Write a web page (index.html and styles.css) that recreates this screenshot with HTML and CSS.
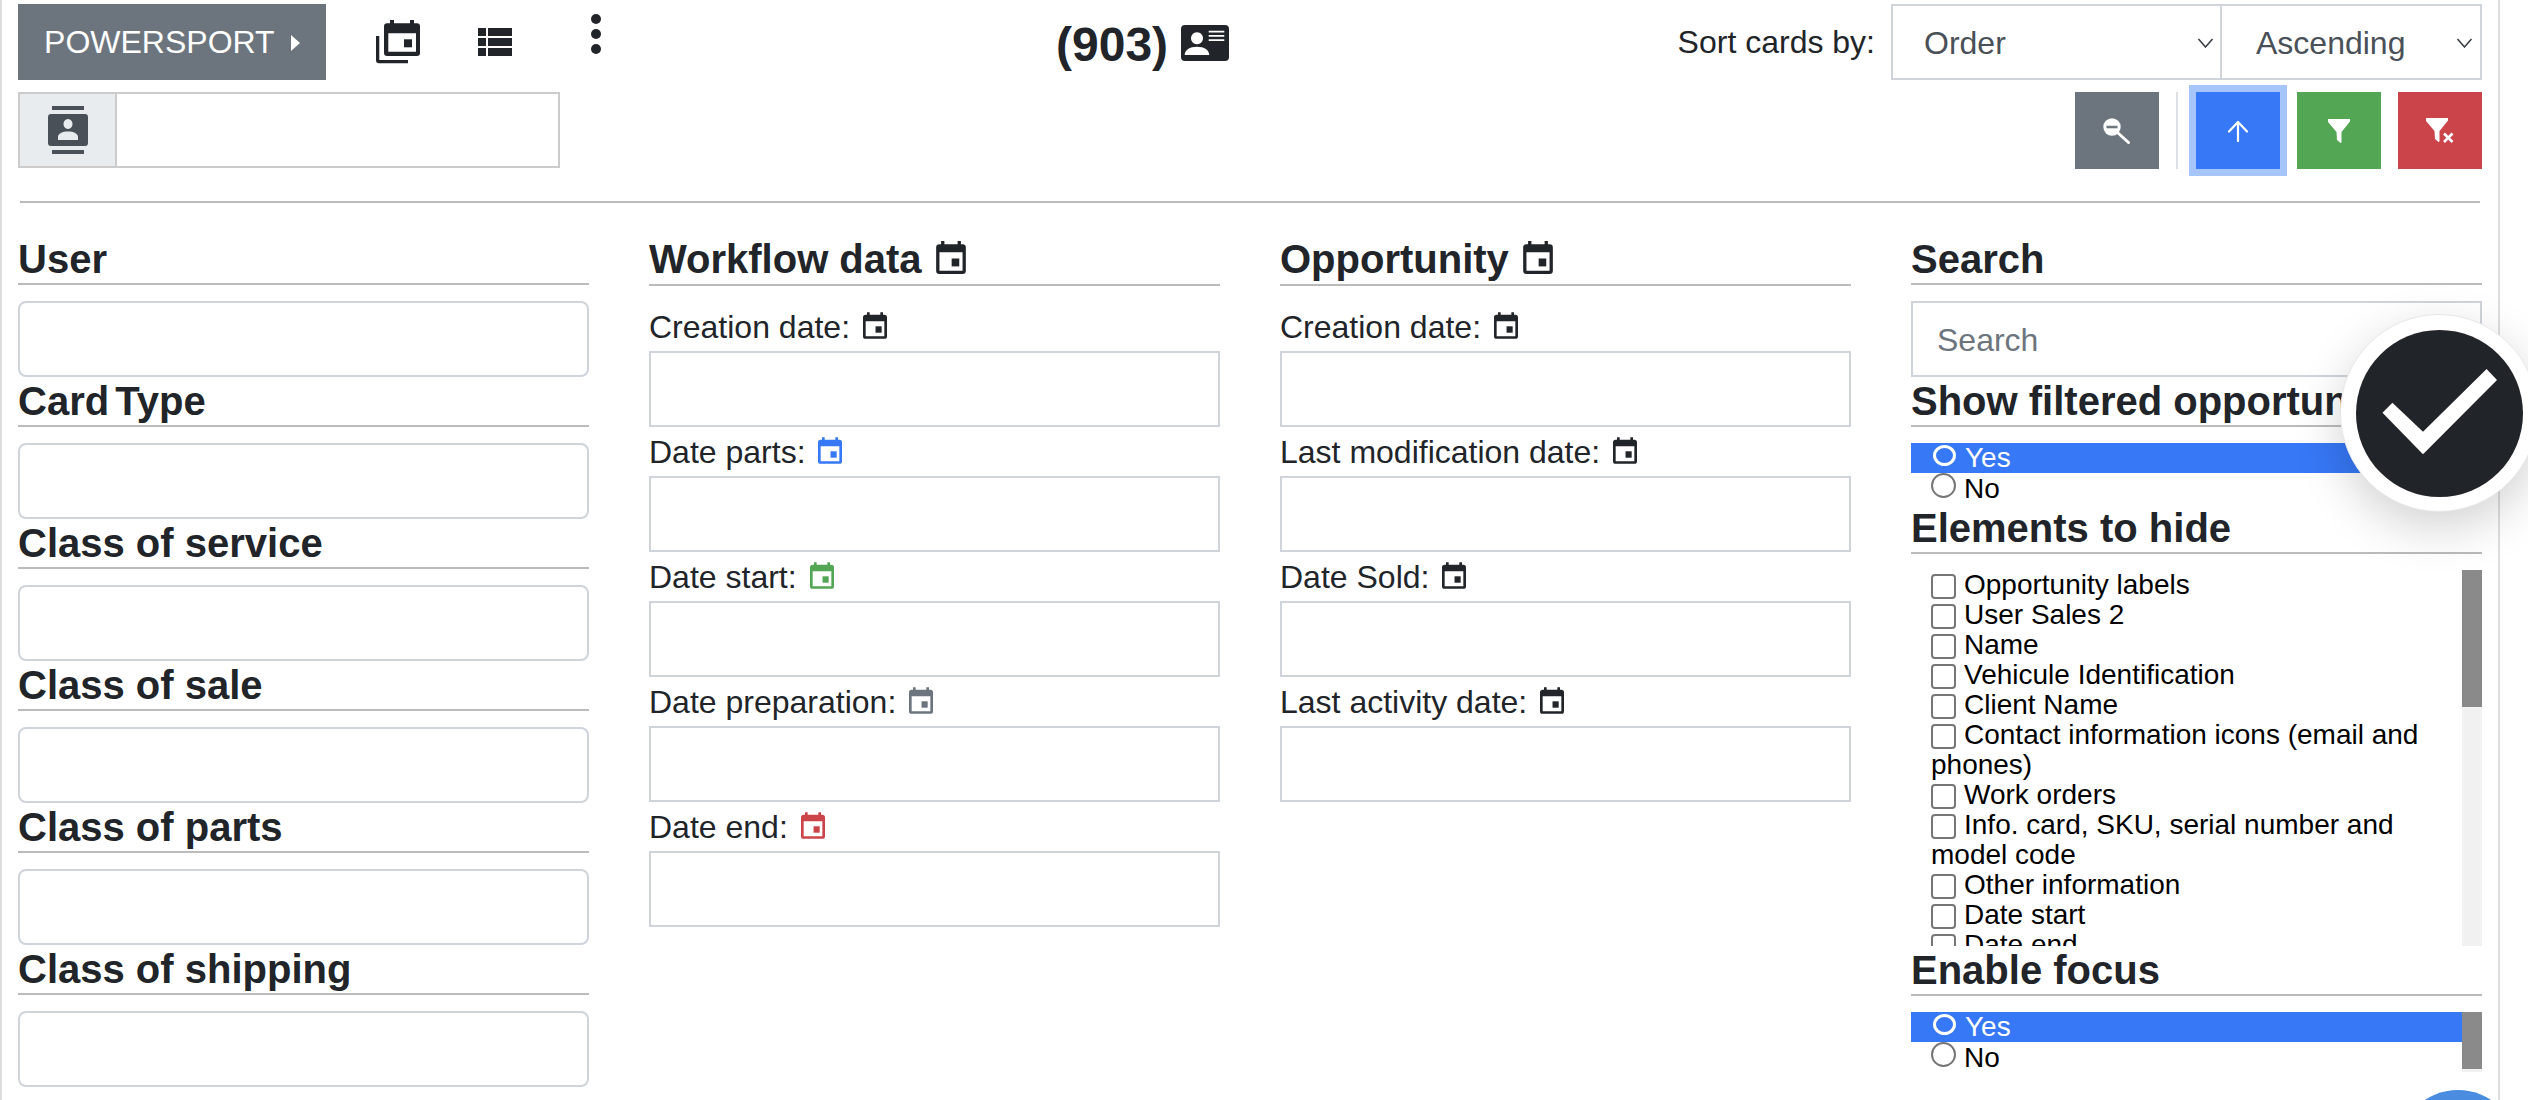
FILE: index.html
```html
<!DOCTYPE html>
<html lang="en">
<head>
    <meta charset="UTF-8">
    <title>Cards filter</title>
    <link rel="stylesheet" href="styles.css">
</head>
<body>
    <svg class="sprite" aria-hidden="true">
        <symbol id="cal" viewBox="0 0 18 20">
            <path fill-rule="evenodd" d="M3 0h2v2h8V0h2v2h1a2 2 0 0 1 2 2v14a2 2 0 0 1-2 2H2a2 2 0 0 1-2-2V4a2 2 0 0 1 2-2h1zM2 6.800v11.200h14V6.800z"/>
            <rect x="9.400" y="10.600" width="4.600" height="4.800"/>
        </symbol>
    </svg>

    <div class="modal">
        <div class="toolbar">
            <div class="toolbar-left">
                <button class="btn-dealer">POWERSPORT <span class="caret"></span></button>
                <svg class="icon-stack" viewBox="0 0 44 44">
                    <path fill-rule="evenodd" d="M14 0h4v3.300h16V0h4v3.300h3a3 3 0 0 1 3 3V33a3 3 0 0 1-3 3H11a3 3 0 0 1-3-3V6.300a3 3 0 0 1 3-3h3zM12.300 13.300v18.400H40V13.300z"/>
                    <rect x="28" y="19.300" width="8" height="8"/>
                    <path d="M0 16h3.300v24H32v3.300H3a3 3 0 0 1-3-3z"/>
                </svg>
                <svg class="icon-table" viewBox="0 0 34 28">
                    <path d="M0 0h8v8H0zM10 0h24v8H10zM0 10h8v8H0zM10 10h24v8H10zM0 20h8v8H0zM10 20h24v8H10z"/>
                </svg>
                <svg class="icon-dots" viewBox="0 0 10 40">
                    <circle cx="5" cy="5" r="5"/><circle cx="5" cy="20" r="5"/><circle cx="5" cy="35" r="5"/>
                </svg>
            </div>
            <div class="count">
                (903)
                <svg class="icon-vcard" viewBox="0 0 48 36">
                    <path fill-rule="evenodd" d="M4 0h40a4 4 0 0 1 4 4v28a4 4 0 0 1-4 4H4a4 4 0 0 1-4-4V4a4 4 0 0 1 4-4zM16 7.300a6 6 0 1 0 .01 0zM3.700 30h24.600c0-5-5-8.300-12.300-8.300S3.700 25 3.700 30zM27.700 5.700v1.800h15.600V5.700zM27.700 10v1.800h15.600V10zM27.700 14.300v1.800h15.600v-1.800z"/>
                </svg>
            </div>
            <div class="sort">
                <label class="sort-label">Sort cards by:</label>
                <div class="select-wrap select-order">
                    <select><option>Order</option></select>
                    <svg class="chevron" viewBox="0 0 16 10"><path d="M1 1l7 8 7-8" fill="none" stroke="#343a40" stroke-width="1.500"/></svg>
                </div>
                <div class="select-wrap select-dir">
                    <select><option>Ascending</option></select>
                    <svg class="chevron" viewBox="0 0 16 10"><path d="M1 1l7 8 7-8" fill="none" stroke="#343a40" stroke-width="1.500"/></svg>
                </div>
            </div>
        </div>

        <div class="toolbar toolbar-second">
            <div class="input-group">
                <span class="addon">
                    <svg class="icon-contacts" viewBox="0 0 40 48">
                        <path fill-rule="evenodd" d="M4 0h32v4H4zM4 44h32v4H4zM3 8h34a3 3 0 0 1 3 3v26a3 3 0 0 1-3 3H3a3 3 0 0 1-3-3V11a3 3 0 0 1 3-3zM20 13a4.500 5 0 1 0 .01 0zM10 34h20v-3c0-3.500-4.500-5.500-10-5.500S10 27.500 10 31z"/>
                    </svg>
                </span>
                <input type="text" class="group-input">
            </div>
            <div class="actions">
                <button class="btn-icon btn-gray">
                    <svg viewBox="0 0 28 26" width="28" height="26">
                        <circle cx="9" cy="9" r="8.700" fill="#fff"/>
                        <rect x="3.500" y="7.800" width="11" height="2.500" fill="#6c757d"/>
                        <path d="M15 15l10.500 9.500" stroke="#fff" stroke-width="3" stroke-linecap="round" fill="none"/>
                    </svg>
                </button>
                <span class="divider"></span>
                <button class="btn-icon btn-blue">
                    <svg viewBox="0 0 22 22" width="22" height="22">
                        <path d="M11 21V2M2 11.500L11 2l9 9.500" stroke="#fff" stroke-width="2.200" stroke-linecap="round" stroke-linejoin="round" fill="none"/>
                    </svg>
                </button>
                <button class="btn-icon btn-green">
                    <svg viewBox="0 0 22 24" width="22" height="24">
                        <path d="M0 0h22v2.500L13.500 13v10.500l-1 .5L9 21l-.5-8L0 3z" fill="#fff"/>
                    </svg>
                </button>
                <button class="btn-icon btn-red">
                    <svg viewBox="0 0 30 26" width="30" height="26">
                        <path d="M1 0h22v2.500L14.500 13v10.500l-1 .5L10 21l-.5-8L1 3z" fill="#fff"/>
                        <path d="M19 15.500l8.500 8.500M27.500 15.500L19 24" stroke="#fff" stroke-width="2.600" fill="none"/>
                    </svg>
                </button>
            </div>
        </div>

        <hr class="rule">

        <div class="columns">
            <div class="column">
                <h4 class="title">User</h4>
                <input type="text" class="field field-round">
                <h4 class="title title-tight">Card Type</h4>
                <input type="text" class="field field-round">
                <h4 class="title">Class of service</h4>
                <input type="text" class="field field-round">
                <h4 class="title">Class of sale</h4>
                <input type="text" class="field field-round">
                <h4 class="title">Class of parts</h4>
                <input type="text" class="field field-round">
                <h4 class="title">Class of shipping</h4>
                <input type="text" class="field field-round">
            </div>

            <div class="column">
                <h4 class="title title-icon">Workflow data <svg class="cal-big"><use href="#cal"/></svg></h4>
                <label class="field-label">Creation date: <svg class="cal-small"><use href="#cal"/></svg></label>
                <input type="text" class="field">
                <label class="field-label">Date parts: <svg class="cal-small c-blue"><use href="#cal"/></svg></label>
                <input type="text" class="field">
                <label class="field-label">Date start: <svg class="cal-small c-green"><use href="#cal"/></svg></label>
                <input type="text" class="field">
                <label class="field-label">Date preparation: <svg class="cal-small c-gray"><use href="#cal"/></svg></label>
                <input type="text" class="field">
                <label class="field-label">Date end: <svg class="cal-small c-red"><use href="#cal"/></svg></label>
                <input type="text" class="field">
            </div>

            <div class="column">
                <h4 class="title title-icon">Opportunity <svg class="cal-big"><use href="#cal"/></svg></h4>
                <label class="field-label">Creation date: <svg class="cal-small"><use href="#cal"/></svg></label>
                <input type="text" class="field">
                <label class="field-label">Last modification date: <svg class="cal-small"><use href="#cal"/></svg></label>
                <input type="text" class="field">
                <label class="field-label">Date Sold: <svg class="cal-small"><use href="#cal"/></svg></label>
                <input type="text" class="field">
                <label class="field-label">Last activity date: <svg class="cal-small"><use href="#cal"/></svg></label>
                <input type="text" class="field">
            </div>

            <div class="column">
                <h4 class="title">Search</h4>
                <input type="text" class="field" placeholder="Search">

                <h4 class="title">Show filtered opportunities</h4>
                <div class="option-list">
                    <label class="option option-on"><input type="radio" name="show" checked>Yes</label>
                    <label class="option"><input type="radio" name="show">No</label>
                </div>

                <h4 class="title">Elements to hide</h4>
                <div class="scroll-box box-elements">
                    <div class="option-list">
                        <label class="option"><input type="checkbox">Opportunity labels</label>
                        <label class="option"><input type="checkbox">User Sales 2</label>
                        <label class="option"><input type="checkbox">Name</label>
                        <label class="option"><input type="checkbox">Vehicule Identification</label>
                        <label class="option"><input type="checkbox">Client Name</label>
                        <label class="option"><input type="checkbox">Contact information icons (email and phones)</label>
                        <label class="option"><input type="checkbox">Work orders</label>
                        <label class="option"><input type="checkbox">Info. card, SKU, serial number and model code</label>
                        <label class="option"><input type="checkbox">Other information</label>
                        <label class="option"><input type="checkbox">Date start</label>
                        <label class="option"><input type="checkbox">Date end</label>
                    </div>
                    <div class="scrollbar"><span class="thumb"></span></div>
                </div>

                <h4 class="title">Enable focus</h4>
                <div class="scroll-box box-focus">
                    <div class="option-list">
                        <label class="option option-on"><input type="radio" name="focus" checked>Yes</label>
                        <label class="option"><input type="radio" name="focus">No</label>
                    </div>
                    <div class="scrollbar"><span class="thumb"></span></div>
                </div>
            </div>
        </div>
    </div>

    <div class="confirm">
        <span class="confirm-inner">
            <svg viewBox="0 0 167 167" width="167" height="167">
                <path d="M36.400 72.700L67 101.700 130.600 39 141 50 67 124.300 26.500 82.700z" fill="#fff"/>
            </svg>
        </span>
    </div>
    <div class="fab"></div>
</body>
</html>
```

FILE: styles.css
```css
* {
    box-sizing: border-box;
}
html, body {
    height: 100%;
    overflow: hidden;
}
body {
    margin: 0;
    background: #fff;
    color: #212529;
    font-family: "Liberation Sans", Arial, sans-serif;
    font-size: 32px;
    line-height: 48px;
}
.sprite {
    display: none;
}
.modal {
    width: 2500px;
    height: 1100px;
    padding: 4px 16px 0;
    border-left: 2px solid #ddd;
    border-right: 2px solid #ddd;
}

/* top bars */
.toolbar {
    display: grid;
    grid-template-columns: 1038px auto 1fr;
    align-items: center;
    height: 76px;
}
.toolbar-second {
    display: flex;
    justify-content: space-between;
    align-items: flex-start;
    margin-top: 12px;
    height: 77px;
}
.toolbar-left {
    display: flex;
    align-items: center;
}
.btn-dealer {
    width: 308px;
    height: 76px;
    border: none;
    padding: 0;
    background: #6c757d;
    color: #fff;
    font: inherit;
}
.caret {
    display: inline-block;
    margin-left: 8px;
    border-left: 9px solid #fff;
    border-top: 8px solid transparent;
    border-bottom: 8px solid transparent;
    vertical-align: 2px;
}
.icon-stack {
    width: 44px;
    height: 44px;
    margin-left: 50px;
    fill: #212529;
}
.icon-table {
    width: 34px;
    height: 28px;
    margin-left: 58px;
    fill: #212529;
}
.icon-dots {
    width: 10px;
    height: 40px;
    margin-left: 79px;
    margin-top: -16px;
    fill: #212529;
}
.count {
    display: flex;
    align-items: center;
    gap: 13px;
    margin-top: 5px;
    font-size: 48px;
    font-weight: bold;
    line-height: 58px;
}
.icon-vcard {
    width: 48px;
    height: 36px;
    margin-top: -3px;
    fill: #212529;
}
.sort {
    display: flex;
    justify-content: flex-end;
    align-items: center;
}
.sort-label {
    margin-right: 16px;
}
.select-wrap {
    position: relative;
    height: 76px;
}
.select-order {
    width: 331px;
}
.select-dir {
    width: 262px;
    margin-left: -2px;
}
.select-wrap select {
    width: 100%;
    height: 100%;
    appearance: none;
    border: 2px solid #ced4da;
    border-radius: 0;
    padding: 2px 48px 0 31px;
    background: #fff;
    color: #495057;
    font: inherit;
}
.select-dir select {
    padding-left: 34px;
}
.chevron {
    position: absolute;
    right: 8px;
    top: 34px;
    width: 17px;
    height: 10px;
}
.select-dir .chevron {
    right: 9px;
}

.input-group {
    display: flex;
    width: 542px;
    height: 76px;
}
.addon {
    display: flex;
    justify-content: center;
    align-items: center;
    width: 99px;
    background: #e9ecef;
    border: 2px solid #ccc;
}
.icon-contacts {
    width: 40px;
    height: 48px;
    fill: #495057;
}
.group-input {
    flex: 1;
    border: 2px solid #ccc;
    border-left: none;
    border-radius: 0;
    outline: none;
}
.actions {
    display: flex;
    align-items: stretch;
    gap: 17px;
    height: 77px;
}
.btn-icon {
    display: flex;
    justify-content: center;
    align-items: center;
    width: 84px;
    border: none;
    padding: 0;
}
.btn-gray {
    background: #6c757d;
}
.btn-blue {
    background: #3778f6;
    box-shadow: 0 0 0 7px #a6c6fb;
}
.btn-green {
    background: #53a653;
}
.btn-red {
    background: #cb444a;
}
.divider {
    width: 2px;
    background: #dee2e6;
    margin-right: 1px;
}
.rule {
    height: 2px;
    margin: 32px 2px;
    border: none;
    background: #bbb;
}

/* filter columns */
.columns {
    display: grid;
    grid-template-columns: repeat(4, 1fr);
    column-gap: 60px;
}
.column {
    min-width: 0;
}
.title {
    margin: 0 0 16px;
    height: 50px;
    border-bottom: 2px solid #bbb;
    font-size: 40px;
    font-weight: bold;
    line-height: 48px;
    white-space: nowrap;
    overflow: hidden;
}
.title-icon {
    height: 51px;
}
.title-tight {
    word-spacing: -5px;
}
.cal-big {
    width: 30px;
    height: 33px;
    margin-left: 3px;
    vertical-align: -1px;
    fill: currentColor;
}
.cal-small {
    width: 24px;
    height: 27px;
    margin-left: 4px;
    vertical-align: -1px;
    fill: #212529;
}
.c-blue {
    fill: #3778f6;
}
.c-green {
    fill: #53a653;
}
.c-gray {
    fill: #6c757d;
}
.c-red {
    fill: #cb444a;
}
.field-label {
    display: block;
    height: 49px;
    padding-top: 1px;
    line-height: 49px;
}
.field {
    display: block;
    width: 100%;
    height: 76px;
    padding: 2px 24px 0;
    border: 2px solid #ced4da;
    border-radius: 0;
    outline: none;
    color: #495057;
    font: inherit;
}
.field::placeholder {
    color: #6c757d;
    opacity: 1;
}
.field-round {
    border-radius: 8px;
}

/* radio and checkbox lists */
.option-list {
    font-size: 28px;
    line-height: 30px;
    color: #000;
}
.scroll-box {
    display: flex;
    overflow: hidden;
}
.scroll-box .option-list {
    flex: 1;
    min-width: 0;
}
.box-elements {
    height: 376px;
}
.box-focus {
    height: 60px;
}
.scrollbar {
    flex: none;
    width: 20px;
    background: #f1f1f1;
}
.thumb {
    display: block;
    background: #8a8a8a;
}
.box-elements .thumb {
    height: 137px;
}
.box-focus .thumb {
    height: 57px;
}
.option {
    display: block;
    padding-left: 20px;
}
.option input {
    appearance: none;
    width: 25px;
    height: 25px;
    margin: 0 8px 0 0;
    border: 2px solid #767676;
    border-radius: 4px;
    background: #fff;
    vertical-align: -5px;
}
.option input[type="radio"] {
    border-radius: 50%;
    vertical-align: 0;
}
.option-on {
    background: #3778f6;
    color: #fff;
}
.option-on input[type="radio"] {
    width: 23px;
    height: 21px;
    margin: 0 9px 0 2px;
    border: 3px solid #fff;
    background: transparent;
    vertical-align: 1px;
}

/* floating things */
.confirm {
    position: fixed;
    left: 2340px;
    top: 314px;
    display: flex;
    justify-content: center;
    align-items: center;
    width: 198px;
    height: 198px;
    border: 1px solid #e6e6e6;
    border-radius: 50%;
    background: #fff;
    box-shadow: 0 16px 48px rgba(0, 0, 0, 0.175);
}
.confirm-inner {
    display: block;
    width: 167px;
    height: 167px;
    border-radius: 50%;
    background: #212529;
}
.fab {
    position: fixed;
    left: 2397px;
    top: 1090px;
    width: 122px;
    height: 122px;
    border-radius: 50%;
    background: #4a8de0;
}
```
